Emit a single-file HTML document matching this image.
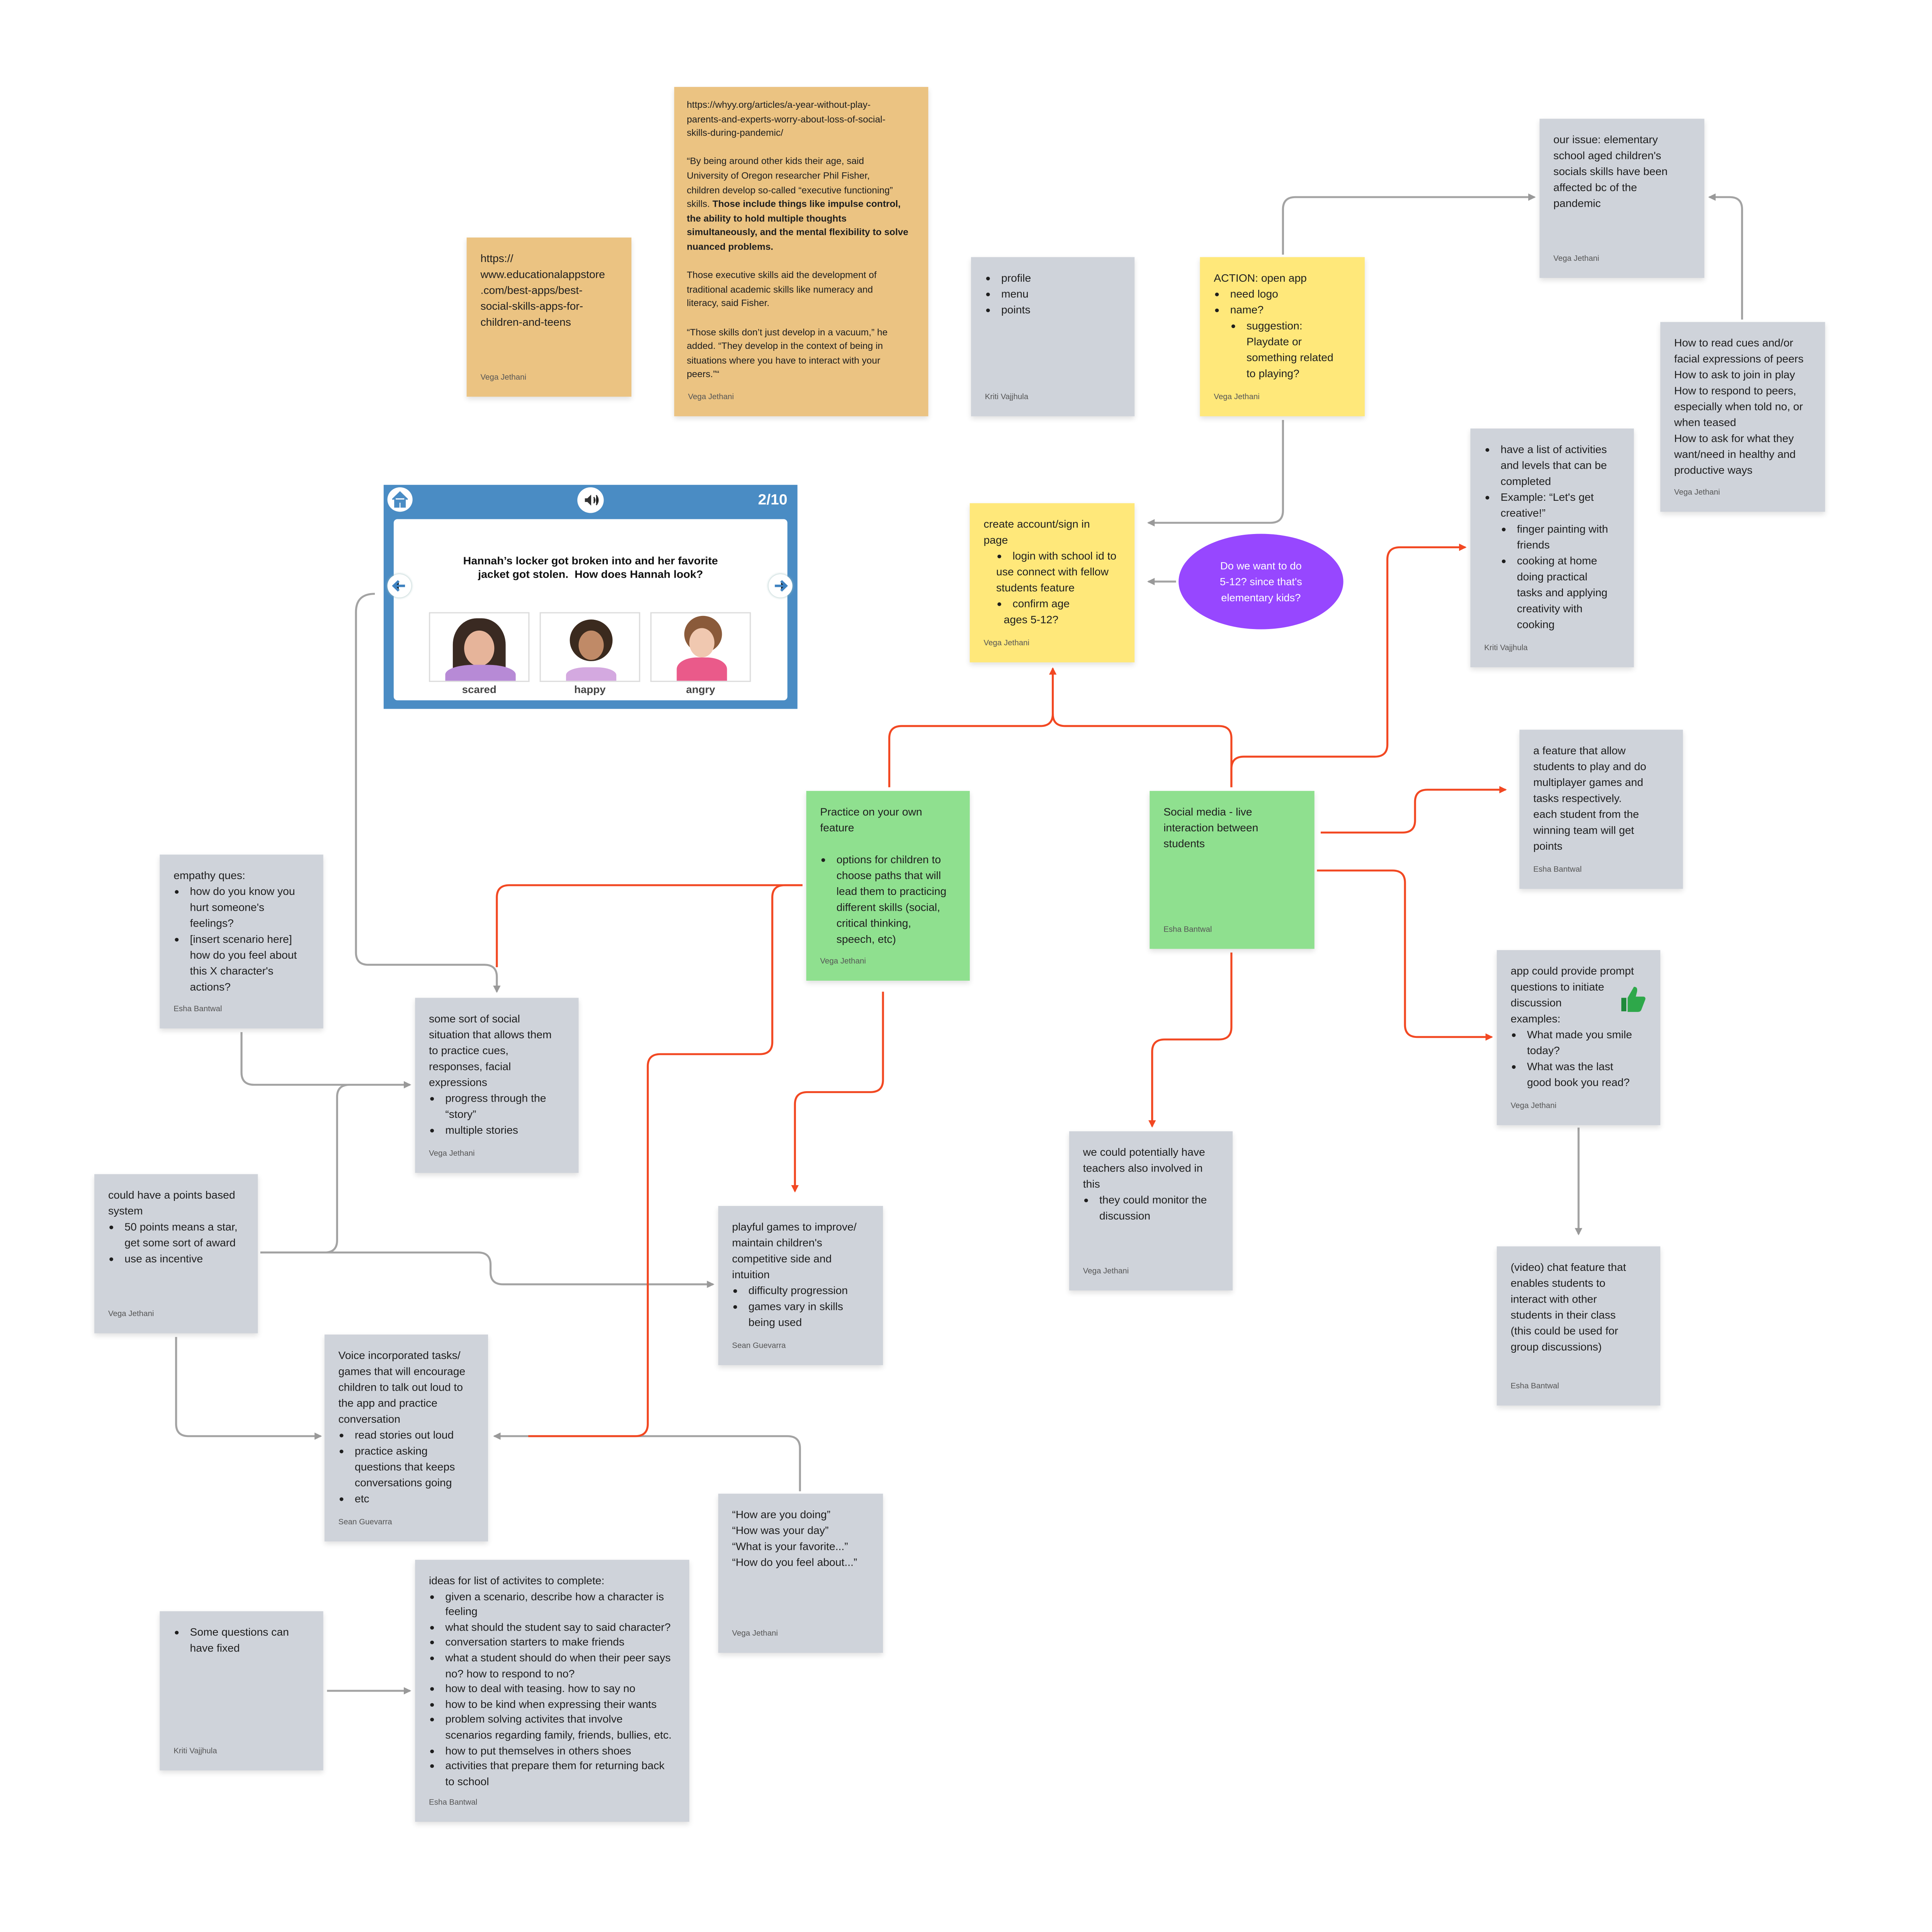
<!DOCTYPE html>
<html><head><meta charset="utf-8">
<style>
html,body{margin:0;padding:0;background:#fff;width:100%;height:100%;overflow:hidden}
#sv{position:absolute;left:0;top:0;width:100vw;height:100vh;display:block}
#w{position:relative;width:1536px;height:1578px;font-family:"Liberation Sans",sans-serif}
.n{position:absolute;box-sizing:border-box;padding:11px 6px 0 11px;font-size:8.7px;line-height:13px;color:#1e1e1e;box-shadow:0 2px 4px rgba(0,0,0,.12);white-space:nowrap}
.g{background:#cfd3da}.y{background:#ffe87a}.o{background:#ebc382}.gr{background:#8fe08f}
.n ul{margin:0;padding-left:13px;list-style:disc}.n ul ul{padding-left:13px;list-style:disc}
.a{position:absolute;left:11px;bottom:11px;font-size:6.3px;color:#555;line-height:8px}
.sm{font-size:7.5px;line-height:11.6px}
#w svg{position:absolute;left:0;top:0}
</style></head><body>
<svg id="sv" viewBox="0 0 1536 1578" preserveAspectRatio="none"><foreignObject x="0" y="0" width="1536" height="1578"><div xmlns="http://www.w3.org/1999/xhtml" id="w">
<svg width="1536" height="1578" fill="none" stroke-width="1.6">
<defs>
<marker id="ag" markerWidth="6" markerHeight="6" refX="5" refY="3" orient="auto" markerUnits="userSpaceOnUse"><path d="M0,0L6,3L0,6z" fill="#999" stroke="none"/></marker>
<marker id="ar" markerWidth="6" markerHeight="6" refX="5" refY="3" orient="auto" markerUnits="userSpaceOnUse"><path d="M0,0L6,3L0,6z" fill="#f24822" stroke="none"/></marker>
</defs>
<g stroke="#a3a3a3">
<path d="M1020,208V171Q1020,161 1030,161H1220" marker-end="url(#ag)"/>
<path d="M1385,261V171Q1385,161 1375,161H1359" marker-end="url(#ag)"/>
<path d="M1020,343V417Q1020,427 1010,427H913" marker-end="url(#ag)"/>
<path d="M935,475H913" marker-end="url(#ag)"/>
<path d="M298,485Q283,485 283,500V778Q283,788 293,788H385Q395,788 395,798V810" marker-end="url(#ag)"/>
<path d="M192,843V876Q192,886 202,886H326" marker-end="url(#ag)"/>
<path d="M207,1023H258Q268,1023 268,1013V896Q268,886 278,886"/>
<path d="M207,1023H380Q390,1023 390,1033V1039Q390,1049 400,1049H567" marker-end="url(#ag)"/>
<path d="M140,1092V1163Q140,1173 150,1173H255" marker-end="url(#ag)"/>
<path d="M636,1218V1183Q636,1173 626,1173H393" marker-end="url(#ag)"/>
<path d="M1255,921V1008" marker-end="url(#ag)"/>
<path d="M260,1381H326" marker-end="url(#ag)"/>
</g>
<g stroke="#f24822">
<path d="M707,643V603Q707,593 717,593H827Q837,593 837,583V546" marker-end="url(#ar)"/>
<path d="M979,643V603Q979,593 969,593H847Q837,593 837,583"/>
<path d="M979,643V628Q979,618 989,618H1093Q1103,618 1103,608V457Q1103,447 1113,447H1165" marker-end="url(#ar)"/>
<path d="M1050,680H1115Q1125,680 1125,670V655Q1125,645 1135,645H1197" marker-end="url(#ar)"/>
<path d="M1047,711H1107Q1117,711 1117,721V837Q1117,847 1127,847H1186" marker-end="url(#ar)"/>
<path d="M979,778V839Q979,849 969,849H926Q916,849 916,859V920" marker-end="url(#ar)"/>
<path d="M638,723H405Q395,723 395,733V790"/>
<path d="M638,723H624Q614,723 614,733V851Q614,861 604,861H525Q515,861 515,871V1163Q515,1173 505,1173H420"/>
<path d="M702,810V882Q702,892 692,892H642Q632,892 632,902V973" marker-end="url(#ar)"/>
</g>
</svg>

<div class="n o" style="left:371px;top:194px;width:131px;height:130px">https://<br/>www.educationalappstore<br/>.com/best-apps/best-<br/>social-skills-apps-for-<br/>children-and-teens<div class="a">Vega Jethani</div></div>

<div class="n o sm" style="left:536px;top:71px;width:202px;height:269px;padding-top:9px;padding-left:10px">https://whyy.org/articles/a-year-without-play-<br/>parents-and-experts-worry-about-loss-of-social-<br/>skills-during-pandemic/<br/><br/>“By being around other kids their age, said<br/>University of Oregon researcher Phil Fisher,<br/>children develop so-called “executive functioning”<br/>skills. <b>Those include things like impulse control,<br/>the ability to hold multiple thoughts<br/>simultaneously, and the mental flexibility to solve<br/>nuanced problems.</b><br/><br/>Those executive skills aid the development of<br/>traditional academic skills like numeracy and<br/>literacy, said Fisher.<br/><br/>“Those skills don’t just develop in a vacuum,” he<br/>added. “They develop in the context of being in<br/>situations where you have to interact with your<br/>peers.”“<div class="a">Vega Jethani</div></div>

<div class="n g" style="left:772px;top:210px;width:130px;height:130px"><ul><li>profile</li><li>menu</li><li>points</li></ul><div class="a">Kriti Vajjhula</div></div>

<div class="n y" style="left:954px;top:210px;width:131px;height:130px">ACTION: open app<ul><li>need logo</li><li>name?<ul><li>suggestion:<br/>Playdate or<br/>something related<br/>to playing?</li></ul></li></ul><div class="a">Vega Jethani</div></div>

<div class="n g" style="left:1224px;top:97px;width:131px;height:130px">our issue: elementary<br/>school aged children's<br/>socials skills have been<br/>affected bc of the<br/>pandemic<div class="a">Vega Jethani</div></div>

<div class="n g" style="left:1320px;top:263px;width:131px;height:155px">How to read cues and/or<br/>facial expressions of peers<br/>How to ask to join in play<br/>How to respond to peers,<br/>especially when told no, or<br/>when teased<br/>How to ask for what they<br/>want/need in healthy and<br/>productive ways<div class="a">Vega Jethani</div></div>

<div class="n g" style="left:1169px;top:350px;width:130px;height:195px"><ul><li>have a list of activities<br/>and levels that can be<br/>completed</li><li>Example: “Let's get<br/>creative!”<ul><li>finger painting with<br/>friends</li><li>cooking at home<br/>doing practical<br/>tasks and applying<br/>creativity with<br/>cooking</li></ul></li></ul><div class="a">Kriti Vajjhula</div></div>

<div class="n y" style="left:771px;top:411px;width:131px;height:130px">create account/sign in<br/>page<ul style="padding-left:23px"><li>login with school id to<br/><span style="margin-left:-13px">use connect with fellow</span><br/><span style="margin-left:-13px">students feature</span></li><li>confirm age<br/><span style="margin-left:-7px">ages 5-12?</span></li></ul><div class="a">Vega Jethani</div></div>

<div style="position:absolute;left:937px;top:436px;width:131px;height:78px;border-radius:50%;background:#9747ff;color:#fff;font-size:8.4px;line-height:13px;text-align:center;display:flex;align-items:center;justify-content:center;white-space:nowrap">Do we want to do<br/>5-12? since that's<br/>elementary kids?</div>

<div class="n gr" style="left:641px;top:646px;width:130px;height:155px">Practice on your own<br/>feature<ul style="margin-top:13px"><li>options for children to<br/>choose paths that will<br/>lead them to practicing<br/>different skills (social,<br/>critical thinking,<br/>speech, etc)</li></ul><div class="a">Vega Jethani</div></div>

<div class="n gr" style="left:914px;top:646px;width:131px;height:129px">Social media - live<br/>interaction between<br/>students<div class="a">Esha Bantwal</div></div>

<div class="n g" style="left:1208px;top:596px;width:130px;height:130px">a feature that allow<br/>students to play and do<br/>multiplayer games and<br/>tasks respectively.<br/>each student from the<br/>winning team will get<br/>points<div class="a">Esha Bantwal</div></div>

<div class="n g" style="left:127px;top:698px;width:130px;height:142px">empathy ques:<ul><li>how do you know you<br/>hurt someone's<br/>feelings?</li><li>[insert scenario here]<br/>how do you feel about<br/>this X character's<br/>actions?</li></ul><div class="a">Esha Bantwal</div></div>

<div class="n g" style="left:330px;top:815px;width:130px;height:143px">some sort of social<br/>situation that allows them<br/>to practice cues,<br/>responses, facial<br/>expressions<ul><li>progress through the<br/>“story”</li><li>multiple stories</li></ul><div class="a">Vega Jethani</div></div>

<div class="n g" style="left:1190px;top:776px;width:130px;height:143px">app could provide prompt<br/>questions to initiate<br/>discussion<br/>examples:<ul><li>What made you smile<br/>today?</li><li>What was the last<br/>good book you read?</li></ul><div class="a">Vega Jethani</div>
<svg style="left:97px;top:28px" width="22" height="24" viewBox="0 0 22 24"><path d="M2,11h4v11H2z" fill="#1e8a3a"/><path d="M7,11l5-9c2,0 3,1 2.5,4l-1,4h6c1.5,0 2,1.5 1.5,2.5l-3,8c-.5,1.5-1.5,2-3,2H7z" fill="#2ea84a"/></svg></div>

<div class="n g" style="left:850px;top:924px;width:130px;height:130px">we could potentially have<br/>teachers also involved in<br/>this<ul><li>they could monitor the<br/>discussion</li></ul><div class="a">Vega Jethani</div></div>

<div class="n g" style="left:75px;top:959px;width:130px;height:130px">could have a points based<br/>system<ul><li>50 points means a star,<br/>get some sort of award</li><li>use as incentive</li></ul><div class="a">Vega Jethani</div></div>

<div class="n g" style="left:571px;top:985px;width:131px;height:130px">playful games to improve/<br/>maintain children's<br/>competitive side and<br/>intuition<ul><li>difficulty progression</li><li>games vary in skills<br/>being used</li></ul><div class="a">Sean Guevarra</div></div>

<div class="n g" style="left:1190px;top:1018px;width:130px;height:130px">(video) chat feature that<br/>enables students to<br/>interact with other<br/>students in their class<br/>(this could be used for<br/>group discussions)<div class="a">Esha Bantwal</div></div>

<div class="n g" style="left:258px;top:1090px;width:130px;height:169px">Voice incorporated tasks/<br/>games that will encourage<br/>children to talk out loud to<br/>the app and practice<br/>conversation<ul><li>read stories out loud</li><li>practice asking<br/>questions that keeps<br/>conversations going</li><li>etc</li></ul><div class="a">Sean Guevarra</div></div>

<div class="n g" style="left:571px;top:1220px;width:131px;height:130px">“How are you doing”<br/>“How was your day”<br/>“What is your favorite...”<br/>“How do you feel about...”<div class="a">Vega Jethani</div></div>

<div class="n g" style="left:330px;top:1274px;width:218px;height:214px;line-height:12.6px">ideas for list of activites to complete:<ul><li>given a scenario, describe how a character is<br/>feeling</li><li>what should the student say to said character?</li><li>conversation starters to make friends</li><li>what a student should do when their peer says<br/>no? how to respond to no?</li><li>how to deal with teasing. how to say no</li><li>how to be kind when expressing their wants</li><li>problem solving activites that involve<br/>scenarios regarding family, friends, bullies, etc.</li><li>how to put themselves in others shoes</li><li>activities that prepare them for returning back<br/>to school</li></ul><div class="a">Esha Bantwal</div></div>

<div class="n g" style="left:127px;top:1316px;width:130px;height:130px"><ul><li>Some questions can<br/>have fixed</li></ul><div class="a">Kriti Vajjhula</div></div>

<div style="position:absolute;left:305px;top:396px;width:329px;height:183px;background:#4a8cc4">
<div style="position:absolute;left:8px;top:28px;width:313px;height:148px;background:#fff;border-radius:3px"></div>
<div style="position:absolute;left:3px;top:2px;width:20px;height:20px;border-radius:50%;background:#fff"><svg width="20" height="20"><path d="M4,10L10,4L16,10M6,9V16H9V12H11V16H14V9" fill="#4a8cc4" stroke="#4a8cc4" stroke-width="1.2"/></svg></div>
<div style="position:absolute;left:154px;top:2px;width:21px;height:21px;border-radius:50%;background:#fff"><svg width="21" height="21"><path d="M6,9H8L11,6V15L8,12H6z" fill="#333"/><path d="M13,8Q15,10.5 13,13M15,6.5Q18,10.5 15,14.5" stroke="#333" stroke-width="1"/></svg></div>
<div style="position:absolute;right:8px;top:5px;color:#fff;font-weight:bold;font-size:12px">2/10</div>
<div style="position:absolute;left:30px;top:57px;width:269px;text-align:center;font-weight:bold;font-size:8.8px;line-height:11px;color:#111;white-space:nowrap">Hannah’s locker got broken into and her favorite<br/>jacket got stolen.&#160; How does Hannah look?</div>
<div style="position:absolute;left:3px;top:73px;width:19px;height:19px;border-radius:50%;background:#fff;box-shadow:0 0 2px #9bb"><svg width="19" height="19"><path d="M14,9.5H5M9,5.5L5,9.5L9,13.5" stroke="#3f82c0" stroke-width="2"/></svg></div>
<div style="position:absolute;left:306px;top:73px;width:19px;height:19px;border-radius:50%;background:#fff;box-shadow:0 0 2px #9bb"><svg width="19" height="19"><path d="M5,9.5H14M10,5.5L14,9.5L10,13.5" stroke="#3f82c0" stroke-width="2"/></svg></div>
<div style="position:absolute;left:36px;top:104px;width:80px;height:57px;border:1px solid #ddd;box-sizing:border-box;overflow:hidden"><div style="position:absolute;left:18px;top:4px;width:42px;height:48px;border-radius:45% 45% 10% 10%;background:#3a2a22"></div><div style="position:absolute;left:27px;top:14px;width:24px;height:29px;border-radius:50%;background:#e6b49a"></div><div style="position:absolute;left:12px;top:42px;width:56px;height:20px;border-radius:40% 40% 0 0;background:#b78ad6"></div></div>
<div style="position:absolute;left:124px;top:104px;width:80px;height:57px;border:1px solid #ddd;box-sizing:border-box;overflow:hidden"><div style="position:absolute;left:23px;top:5px;width:34px;height:34px;border-radius:50%;background:#3b2a1e"></div><div style="position:absolute;left:30px;top:14px;width:20px;height:24px;border-radius:50%;background:#c08a67"></div><div style="position:absolute;left:20px;top:44px;width:40px;height:16px;border-radius:40% 40% 0 0;background:#d4a9e0"></div></div>
<div style="position:absolute;left:212px;top:104px;width:80px;height:57px;border:1px solid #ddd;box-sizing:border-box;overflow:hidden"><div style="position:absolute;left:26px;top:2px;width:30px;height:30px;border-radius:50%;background:#8a5a3a"></div><div style="position:absolute;left:30px;top:12px;width:20px;height:24px;border-radius:50%;background:#f0c8b0"></div><div style="position:absolute;left:20px;top:36px;width:40px;height:24px;border-radius:40% 40% 0 0;background:#ea5a8a"></div></div>
<div style="position:absolute;left:36px;top:162px;width:80px;text-align:center;font-size:8.5px;color:#444;font-weight:bold">scared</div>
<div style="position:absolute;left:124px;top:162px;width:80px;text-align:center;font-size:8.5px;color:#444;font-weight:bold">happy</div>
<div style="position:absolute;left:212px;top:162px;width:80px;text-align:center;font-size:8.5px;color:#444;font-weight:bold">angry</div>
</div>
</div></foreignObject></svg>
</body></html>
